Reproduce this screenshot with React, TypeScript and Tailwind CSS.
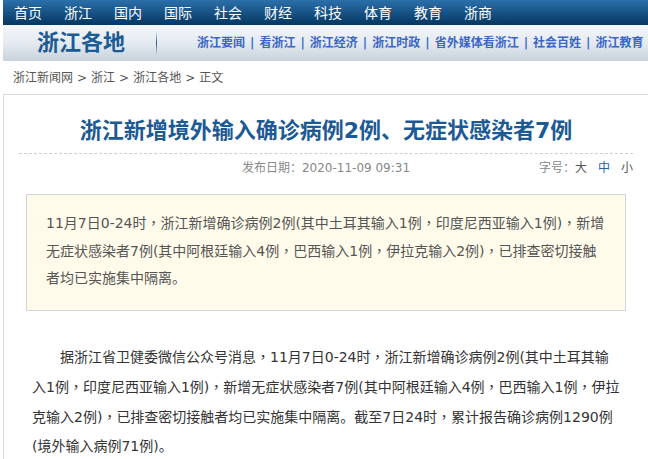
import { Fragment } from "react";

const navItems = ["首页", "浙江", "国内", "国际", "社会", "财经", "科技", "体育", "教育", "浙商"];
const subLinks = ["浙江要闻", "看浙江", "浙江经济", "浙江时政", "省外媒体看浙江", "社会百姓", "浙江教育"];
const crumbs = ["浙江新闻网", "浙江", "浙江各地", "正文"];

const summaryLines = [
  "11月7日0-24时，浙江新增确诊病例2例(其中土耳其输入1例，印度尼西亚输入1例)，新增",
  "无症状感染者7例(其中阿根廷输入4例，巴西输入1例，伊拉克输入2例)，已排查密切接触",
  "者均已实施集中隔离。",
];

const bodyLines = [
  "据浙江省卫健委微信公众号消息，11月7日0-24时，浙江新增确诊病例2例(其中土耳其输",
  "入1例，印度尼西亚输入1例)，新增无症状感染者7例(其中阿根廷输入4例，巴西输入1例，伊拉",
  "克输入2例)，已排查密切接触者均已实施集中隔离。截至7日24时，累计报告确诊病例1290例",
  "(境外输入病例71例)。",
];

// full-width commas sit centred in the source font
function Line({ text }: { text: string }) {
  const parts = text.split("，");
  return (
    <>
      {parts.map((p, i) => (
        <Fragment key={i}>
          {i > 0 && <span className="font-['Noto_Sans_CJK_TC',sans-serif]">，</span>}
          {p}
        </Fragment>
      ))}
    </>
  );
}

function TopNav() {
  return (
    <div className="ml-[3px] flex h-[25px] items-center gap-[22px] whitespace-nowrap bg-linear-to-b from-[#2b70aa] to-[#053762] pl-[11px] text-[14px] leading-none text-white">
      {navItems.map((n) => (
        <span key={n}>{n}</span>
      ))}
    </div>
  );
}

function SubHeader() {
  return (
    <div className="ml-[3px] flex h-[36px] items-center whitespace-nowrap bg-linear-to-b from-[#f4f7fa] via-[#e4eaf0] to-[#c8d2dc] pl-[34px]">
      <span className="text-[22px] font-bold leading-none text-[#1b5b96]">浙江各地</span>
      <div className="ml-[31px] h-[24px] w-px bg-linear-to-b from-transparent via-[#1f5a8f] to-transparent" />
      <div className="ml-[40px] flex items-center gap-[5px] text-[12px] font-bold leading-none text-[#3a66c6]">
        {subLinks.map((l, i) => (
          <span key={l} className="flex items-center gap-[5px]">
            {i > 0 && <span className="text-[#3a6fcc]">|</span>}
            <span>{l}</span>
          </span>
        ))}
      </div>
    </div>
  );
}

function Breadcrumb() {
  return (
    <div className="flex h-[33px] items-center pl-[13px] text-[12px] text-[#555]">
      {crumbs.map((c, i) => (
        <span key={c}>
          {i > 0 && <span className="px-[4px]">&gt;</span>}
          {c}
        </span>
      ))}
    </div>
  );
}

export default function App() {
  return (
    <div className="w-[648px] overflow-hidden bg-white font-['DejaVu_Sans','Noto_Sans_CJK_SC',sans-serif]">
      <TopNav />
      <SubHeader />
      <Breadcrumb />
      <div className="ml-[3px] w-[646px] border border-[#dadada] pb-10">
        <h1 className="pt-[21px] text-center text-[22px] font-bold leading-[30px] text-[#1c5a95]">
          浙江新增境外输入确诊病例2例、无症状感染者7例
        </h1>
        <div className="mx-[15px] mt-[7px] border-t border-dashed border-[#cfcfcf]" />
        <div className="mt-[4px] grid grid-cols-[1fr_auto_1fr] text-[12px] leading-[20px] text-[#888]">
          <div />
          <div>发布日期：2020-11-09 09:31</div>
          <div className="flex justify-end pr-[15px]">
            <span>字号：</span>
            <span className="text-[#555]">大</span>
            <span className="ml-[11px] text-[#1e62a8]">中</span>
            <span className="ml-[11px] text-[#555]">小</span>
          </div>
        </div>
        <div className="mx-[22px] mt-[16px] whitespace-nowrap border border-[#d4d4d4] bg-[#fffbea] pb-[18px] pl-[19px] pt-[14px] text-[14px] leading-[27px] text-[#555]">
          {summaryLines.map((l) => (
            <div key={l}>
              <Line text={l} />
            </div>
          ))}
        </div>
        <p className="mt-[31px] whitespace-nowrap pl-[28px] indent-[28px] text-[14px] leading-[29px] text-[#333]">
          {bodyLines.map((l, i) => (
            <span key={l}>
              {i > 0 && <br />}
              <Line text={l} />
            </span>
          ))}
        </p>
      </div>
    </div>
  );
}
